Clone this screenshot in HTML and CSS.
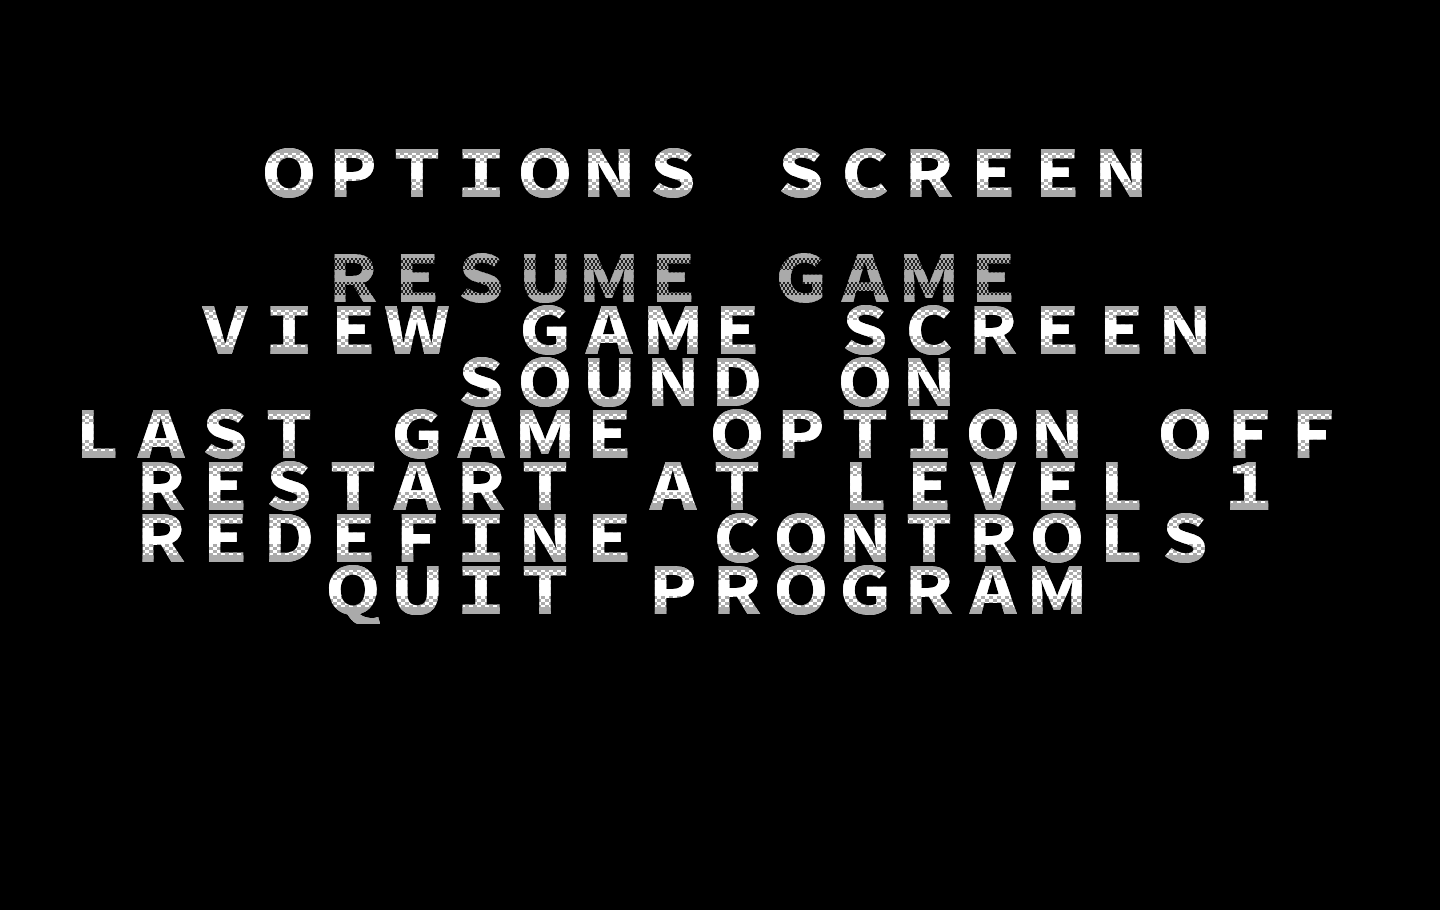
FILE: index.html
```html
<!DOCTYPE html>
<html lang="en">
<head>
<meta charset="utf-8">
<title>Options Screen</title>
<link rel="stylesheet" href="styles.css">
</head>
<body>
<main class="screen">
  <h1 class="line title">OPTIONS SCREEN</h1>
  <nav class="menu" aria-label="Options">
    <button class="line odd" type="button" disabled>RESUME GAME</button>
    <button class="line" type="button">VIEW GAME SCREEN</button>
    <button class="line" type="button">SOUND ON</button>
    <button class="line" type="button">LAST GAME OPTION OFF</button>
    <button class="line" type="button">RESTART AT LEVEL 1</button>
    <button class="line odd" type="button">REDEFINE CONTROLS</button>
    <button class="line" type="button">QUIT PROGRAM</button>
  </nav>
</main>
</body>
</html>
```
FILE: styles.css
```css
* { box-sizing: border-box; }
body {
  margin: 0;
  min-height: 100vh;
  background: #000;
}
.screen {
  padding: 143px 30px 0 0;
  display: flex;
  flex-direction: column;
  gap: 53px;
}
.menu {
  display: flex;
  flex-direction: column;
  align-items: center;
}
.line {
  margin: 0 0 -12px;
  padding: 0 0 12px;
  border: 0;
  font-family: "Noto Sans CJK JP", "DejaVu Sans", sans-serif;
  font-size: 64px;
  font-weight: 900;
  line-height: 52px;
  font-variant-east-asian: full-width;
  text-align: center;
  white-space: nowrap;
  color: transparent;
  background:
    linear-gradient(#aaa 0 10px, transparent 10px 47px, #aaa 47px),
    linear-gradient(transparent 20px, #fff 20px 36px, transparent 36px),
    repeating-conic-gradient(#aaa 0 25%, #fff 0 50%) 0 0 / 8px 6px;
  -webkit-background-clip: text;
  background-clip: text;
}
.odd { padding-right: 64px; }
.line:disabled {
  color: transparent;
  background:
    linear-gradient(#aaa 0 10px, transparent 10px 22px, #aaa 22px 34px, transparent 34px 47px, #aaa 47px),
    repeating-conic-gradient(#aaa 0 25%, #222 0 50%) 0 0 / 4px 6px;
  -webkit-background-clip: text;
  background-clip: text;
}
```
